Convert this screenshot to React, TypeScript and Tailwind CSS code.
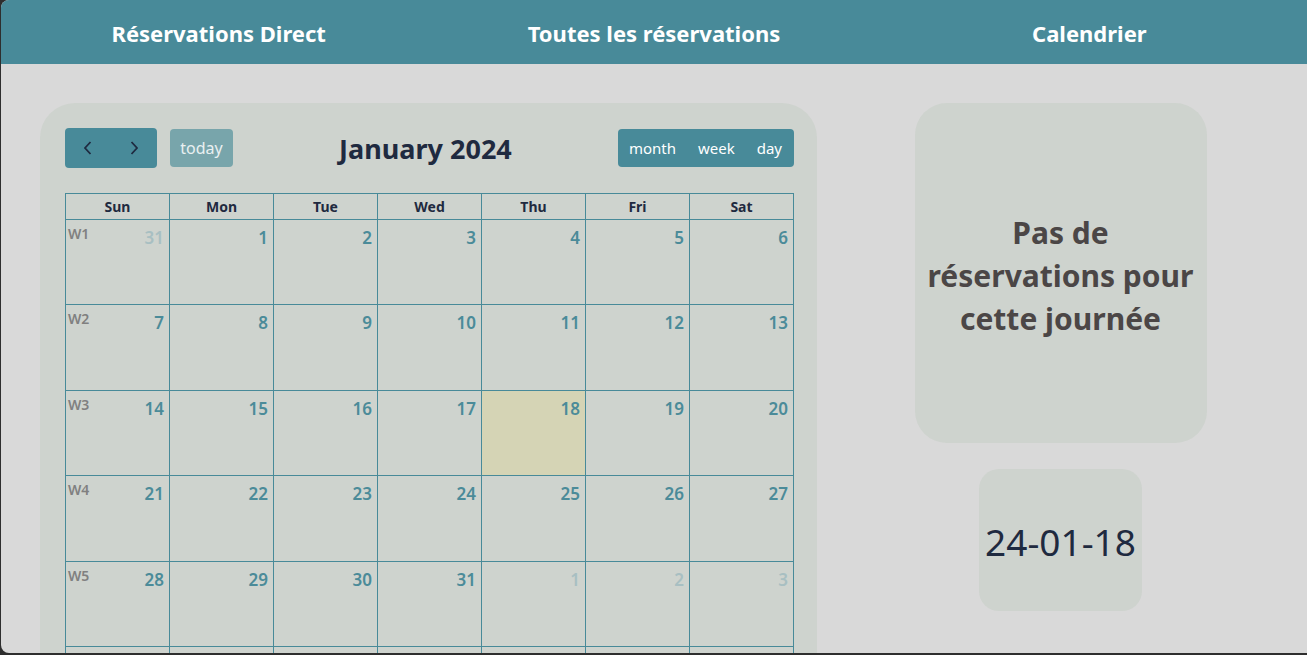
const weeks: { n: number; other: boolean }[][] = [
  [
    { n: 31, other: true },
    { n: 1, other: false },
    { n: 2, other: false },
    { n: 3, other: false },
    { n: 4, other: false },
    { n: 5, other: false },
    { n: 6, other: false },
  ],
  [7, 8, 9, 10, 11, 12, 13].map((n) => ({ n, other: false })),
  [14, 15, 16, 17, 18, 19, 20].map((n) => ({ n, other: false })),
  [21, 22, 23, 24, 25, 26, 27].map((n) => ({ n, other: false })),
  [
    { n: 28, other: false },
    { n: 29, other: false },
    { n: 30, other: false },
    { n: 31, other: false },
    { n: 1, other: true },
    { n: 2, other: true },
    { n: 3, other: true },
  ],
  [4, 5, 6, 7, 8, 9, 10].map((n) => ({ n, other: true })),
];

const days = ["Sun", "Mon", "Tue", "Wed", "Thu", "Fri", "Sat"];

const Chevron = ({ dir }: { dir: "left" | "right" }) => (
  <svg width="10" height="16" viewBox="0 0 10 16" fill="none">
    <path
      d={dir === "left" ? "M7.5 2 L2 8 L7.5 14" : "M2.5 2 L8 8 L2.5 14"}
      stroke="#1f2a40"
      strokeWidth="1.8"
    />
  </svg>
);

export default function App() {
  return (
    <div className="h-[655px] w-[1307px] overflow-hidden bg-[#2e2e2e] font-['Noto_Sans',sans-serif]">
      <div className="flex h-[653px] ml-px flex-col overflow-hidden rounded-l-[8px] bg-[#d9d9d9]">
        <header className="grid h-[64px] shrink-0 grid-cols-3 items-center bg-[#488a99] pt-[3px] text-[22px] font-bold text-white">
          <div className="text-center">Réservations Direct</div>
          <div className="text-center">Toutes les réservations</div>
          <div className="text-center">Calendrier</div>
        </header>

        <main className="mr-[3px] flex flex-1 items-start overflow-hidden pl-[39px] pt-[39px]">
          {/* calendar */}
          <section className="w-[777px] shrink-0 rounded-[35px] bg-[#ced3ce] pb-[40px] pl-[25px] pr-[23px] pt-[25px]">
            <div className="mb-[25px] flex h-[40px] items-center justify-between">
              <div className="flex items-center gap-[13px]">
                <div className="flex h-[40px] overflow-hidden rounded-[4px] bg-[#488a99]">
                  <button className="flex w-[46px] items-center justify-center">
                    <Chevron dir="left" />
                  </button>
                  <button className="flex w-[46px] items-center justify-center">
                    <Chevron dir="right" />
                  </button>
                </div>
                <button className="h-[38px] w-[63px] rounded-[4px] bg-[#78a5ab] text-[16px] text-[#e9f0f1]">
                  today
                </button>
              </div>
              <h2 className="pt-[2px] text-[27px] font-bold text-[#1f2a40]">January 2024</h2>
              <div className="flex h-[38px] overflow-hidden rounded-[4px] bg-[#488a99] text-[15px] text-white">
                <button className="pl-[11px] pr-[11px]">month</button>
                <button className="px-[11px]">week</button>
                <button className="pl-[11px] pr-[12px]">day</button>
              </div>
            </div>

            <div className="grid w-[729px] grid-cols-[repeat(7,103px)] grid-rows-[25px_84px_85px_84px_85px_84px_85px] gap-px bg-[#488a99] p-px">
              {days.map((d) => (
                <div
                  key={d}
                  className="flex items-center justify-center bg-[#ced3ce] text-[14px] font-bold text-[#1f2a40]"
                >
                  {d}
                </div>
              ))}
              {weeks.map((week, wi) =>
                week.map((day, di) => {
                  const today = wi === 2 && di === 4;
                  return (
                    <div
                      key={`${wi}-${di}`}
                      className={`relative ${today ? "bg-[#d5d4b5]" : "bg-[#ced3ce]"}`}
                    >
                      {di === 0 && (
                        <span className="absolute left-[2px] top-[3px] text-[14px] font-semibold text-[#808080]">
                          W{wi + 1}
                        </span>
                      )}
                      <div
                        className={`pr-[5px] pt-[6px] text-right text-[17px] font-semibold leading-[24px] ${
                          day.other ? "text-[#a8bfc2]" : "text-[#4b8b99]"
                        }`}
                      >
                        {day.n}
                      </div>
                    </div>
                  );
                })
              )}
            </div>
          </section>

          {/* side */}
          <aside className="flex flex-1 flex-col items-center gap-[26px]">
            <div className="flex h-[340px] w-[292px] items-center justify-center rounded-[32px] bg-[#ced3ce] px-[10px] pt-[4px] text-center text-[30px] font-bold leading-[43px] text-[#4b4646]">
              <p>
                Pas de
                <br />
                réservations pour
                <br />
                cette journée
              </p>
            </div>
            <div className="flex h-[142px] w-[163px] items-center justify-center whitespace-nowrap rounded-[20px] bg-[#ced3ce] pt-[4px] text-[37px] text-[#1f2a40]">
              24-01-18
            </div>
          </aside>
        </main>
      </div>
    </div>
  );
}
